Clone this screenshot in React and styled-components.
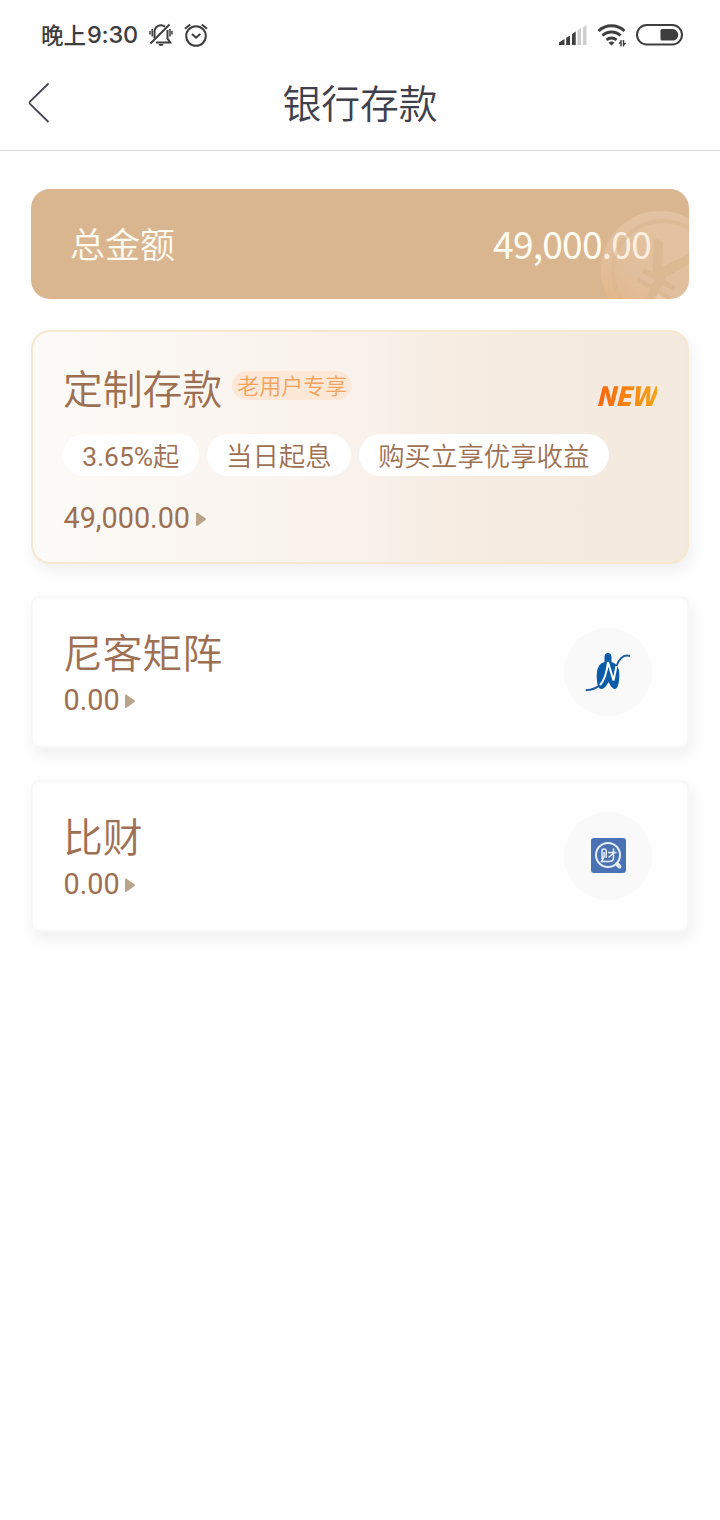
import React from 'react';
import styled, { createGlobalStyle } from 'styled-components';

const GlobalStyle = createGlobalStyle`
    * {
        box-sizing: border-box;
    }

    body {
        margin: 0;
        background-color: #FEFEFE;
        font-family: Roboto, 'Noto Sans CJK SC', sans-serif;
    }
`

const Page = styled.div`
    width: 720px;
    min-height: 1520px;
    background-color: #FEFEFE;
`

const StatusBar = styled.div`
    display: flex;
    align-items: center;
    height: 70px;
    padding: 0 37px 0 41px;
`

const Clock = styled.span`
    display: flex;
    align-items: center;
    height: 32px;
    color: #3E3E3E;
    font-family: 'Noto Sans CJK SC', sans-serif;
    font-size: 22.5px;
    font-weight: 500;
    line-height: 28px;
    padding-bottom: 2px;
`

const Digits = styled.span`
    margin: 2px 0 0 1px;
    font-family: Inter, sans-serif;
    font-size: 23.5px;
    font-weight: 500;
    letter-spacing: -0.2px;
`

const StatusIcons = styled.div`
    display: flex;
    align-items: center;
    gap: ${props => props.$gap};
    margin-left: ${props => props.$push || 'auto'};
`

const Header = styled.header`
    display: grid;
    grid-template-columns: 100px 1fr 100px;
    align-items: center;
    height: 81px;
    padding-bottom: 14px;
    border-bottom: 1px solid #DCDCDC;
`

const BackButton = styled.button`
    display: flex;
    height: 42px;
    padding: 0 0 0 27px;
    border: none;
    background: none;
`

const Title = styled.h1`
    margin: 4px 0 0;
    color: #40404C;
    font-size: 38.8px;
    font-weight: 350;
    line-height: 60px;
    text-align: center;
`

const Content = styled.main`
    display: flex;
    flex-direction: column;
    padding: 38px 31px;
`

const TotalCard = styled.section`
    position: relative;
    display: flex;
    align-items: center;
    justify-content: space-between;
    height: 110px;
    padding: 0 38px 3px 39px;
    border-radius: 19px;
    overflow: hidden;
    background-color: #DAB690;
    color: #FFFCF3;
    font-family: 'Noto Sans CJK SC', sans-serif;
    font-size: 35px;
    font-weight: 350;
`

const TotalAmount = styled.span`
    font-size: 37.2px;
    font-weight: 400;
    letter-spacing: -0.8px;
`

// the coin is see-through and lies over the last digits
const CoinMark = styled.svg`
    position: absolute;
    right: 0;
    bottom: 0;
`

const DepositCard = styled.section`
    height: 234px;
    margin-top: 31px;
    padding: 30px 30px 0 30px;
    border: 2px solid #F6E7CF;
    border-radius: 19px;
    background: linear-gradient(90deg, #FCFBF7 0%, #F9F1EB 50%, #F6ECE1 66%, #F4E9DE 100%);
    box-shadow: 3px 7px 14px rgba(0, 0, 0, 0.06);
`

const DepositHead = styled.div`
    display: flex;
    height: 50px;
`

const Name = styled.h2`
    margin: 0;
    padding-top: 4px;
    color: #9E7053;
    font-size: 39.8px;
    font-weight: 350;
    line-height: 50px;
`

const Badge = styled.span`
    height: 29px;
    margin: 9px 0 0 10px;
    padding: 0 4px 0 5px;
    border-radius: 15px;
    background-color: #FDE8D8;
    color: #F3A35C;
    font-size: 22px;
    font-weight: 350;
    line-height: 31px;
`

const NewTag = styled.span`
    margin: 14px 0 0 auto;
    padding-right: 2px;
    background: linear-gradient(90deg, #F9640F, #F5A318);
    background-clip: text;
    color: transparent;
    font-family: 'Noto Sans CJK SC', sans-serif;
    font-size: 26.4px;
    font-style: italic;
    font-weight: 900;
    letter-spacing: -0.7px;
    line-height: 37px;
`

const Chips = styled.div`
    display: flex;
    gap: 8px;
    margin-top: 22px;
`

const Chip = styled.span`
    height: 42px;
    padding: 0 19.3px;
    border-radius: 21px;
    background-color: white;
    color: #9E7053;
    font-size: 26.4px;
    font-weight: 350;
    line-height: 46px;
`

const Rate = styled.span`
    font-weight: 400;
`

const Amount = styled.div`
    display: flex;
    align-items: center;
    gap: 5.5px;
    margin-top: ${props => props.$top || '0'};
    padding-left: 0.5px;
    color: #9E7053;
    font-size: 28.8px;
    line-height: 40px;
`

const BankCard = styled.section`
    display: flex;
    align-items: center;
    justify-content: space-between;
    height: 152px;
    margin-top: ${props => props.$top};
    padding: 0 35px 0 30px;
    border: 2px solid #F7F7F7;
    border-radius: 8px;
    background-color: #FEFEFE;
    box-shadow: 3px 7px 14px rgba(0, 0, 0, 0.06);
`

const BankText = styled.div`
    padding-top: 2px;
`

const LogoCircle = styled.div`
    display: flex;
    align-items: center;
    justify-content: center;
    width: 88px;
    height: 88px;
    border-radius: 50%;
    background-color: #F9F9F9;
`

const MutedBell = () => (
    <svg width="24" height="24" viewBox="0 0 24 24" fill="none" stroke="#3E3E3E" strokeWidth="2">
        <path d="M5.500 15.500V8.800a6.500 6.500 0 0 1 10.500-5.200M18.500 7v8.500l2.700 4H7" />
        <path d="M1.500 20.500L20.500 1.500" />
        <path d="M9.500 21h5a2.500 2 0 0 1-5 0z" fill="#3E3E3E" stroke="none" />
        <path d="M1 8v3.500M3.200 6v7.500M21 6v7.500M23 8v3.500" strokeWidth="1.500" />
    </svg>
);

const AlarmClock = () => (
    <svg width="24" height="24" viewBox="0 0 24 24" fill="none" stroke="#3E3E3E" strokeWidth="2">
        <circle cx="12" cy="13" r="9.800" />
        <path d="M8 11l4 3.700 4.300-3.700M1 5.800l5.200-4.300M23 5.800l-5.200-4.300" />
    </svg>
);

const Signal = () => (
    <svg width="28" height="20" viewBox="0 0 28 20">
        <path d="M0 20v-2.500l5.500-3.500v6zM7.200 20v-7.200l3.800-2v9.200zM13 20V9l3.700-2.500V20z" fill="#3E3E3E" />
        <path d="M18.500 20V5.500l3.500-2.500v17zM24 20V2.500L27.500 0v20z" fill="#CFCFCF" />
    </svg>
);

const Wifi = () => (
    <svg width="29" height="24" viewBox="0 0 29 24" fill="none" stroke="#3E3E3E" strokeWidth="3">
        <path d="M1.500 8a19 19 0 0 1 26 0M5.500 12.500a13 13 0 0 1 18 0M9.500 17a7.500 7.500 0 0 1 10 0" />
        <path d="M11.500 19.800a4.500 4.500 0 0 1 6 0l-3 2.700z" fill="#3E3E3E" stroke="none" />
        <path d="M24 17v6.500M22 20.500l2-1.500M26.500 17v6.500M28.500 20l-2 2" strokeWidth="1.400" />
    </svg>
);

const Battery = () => (
    <svg width="47" height="22" viewBox="0 0 47 22">
        <rect x="1" y="1" width="45" height="19.500" rx="9.750" fill="none" stroke="#3E3E3E" strokeWidth="2" />
        <path d="M26 5h10.500a5.800 5.800 0 0 1 0 11.600H26a1.500 1.500 0 0 1-1.500-1.500V6.500A1.500 1.500 0 0 1 26 5z" fill="#3E3E3E" />
    </svg>
);

const Coin = () => (
    <CoinMark width="90" height="90" viewBox="0 0 90 90">
        <defs>
            <linearGradient id="coin" x1="0" y1="0.85" x2="0.5" y2="0.1">
                <stop offset="0" stopColor="#F0AE72" stopOpacity="0.5" />
                <stop offset="0.5" stopColor="#F1D3B8" stopOpacity="0.3" />
                <stop offset="1" stopColor="#F1D7BE" stopOpacity="0.36" />
            </linearGradient>
        </defs>
        <circle cx="61" cy="61" r="59" fill="url(#coin)" />
        <circle cx="64" cy="62" r="50" fill="none" stroke="#DAB690" strokeOpacity="0.6" strokeWidth="4" />
        <path
            d="M55 28.700L64 33.300L62.500 58.500L90 44.500V55.500L67 68L65.500 71L77 77L74 81.500L63 75.500L60 81L72 87.500L70.500 90H47L51 80.500L37 73L39.500 68.500L53 76L55.500 70.500L43 64L45.500 59.500L54 64z"
            fill="#DAB690"
            fillOpacity="0.8"
        />
        <path d="M58.500 84L56 90H68z" fill="#E4C5A4" />
    </CoinMark>
);

const Arrow = () => (
    <svg width="11" height="18" viewBox="0 -2 11 18">
        <path d="M0 2.500Q0 1 1.500 1.800L9.500 7.200Q10.500 8 9.500 9L1.500 14.700Q0 15.500 0 14z" fill="#B9A389" />
    </svg>
);

const NikeLogo = () => (
    <svg width="50" height="44" viewBox="0 0 50 44" fill="none">
        <path d="M21.500 7Q21.500 3 25 3T28.500 7V12Q36.300 14 36.300 24Q36.300 39 31.500 39Q29 39 25.500 32Q22 39 18.500 39Q13.700 39 13.700 25Q13.700 14 21.500 12z" fill="#0B5CA8" />
        <path d="M2.700 40.300Q12 40 18 34M33.500 16Q38 3.500 47 6" stroke="#1F5F9F" strokeWidth="1.900" />
        <path d="M17 35Q23 29 25 12L30.500 30.500L33.500 16" stroke="white" strokeWidth="2" />
    </svg>
);

const BicaiLogo = () => (
    <svg width="35" height="35" viewBox="0 0 35 35" fill="none" stroke="#E6EEFA">
        <rect width="35" height="35" rx="3" fill="#4A72B5" stroke="none" />
        <circle cx="17" cy="17" r="12" strokeWidth="2" />
        <path d="M26 26l2.500 2.500" strokeWidth="4" strokeLinecap="round" />
        <path d="M11 21V12.500Q11 11 13 11T15.200 12.500V20M13.100 14v5L10.500 23.500H18Q22.500 23.500 22.500 20V10.500M17 14.500H25.500M22 15.500L17.500 19.500" strokeWidth="1.500" />
    </svg>
);

const Bank = ({name, amount, logo, top}) => {
    return (
        <BankCard $top={top}>
            <BankText>
                <Name>{name}</Name>
                <Amount>{amount}<Arrow /></Amount>
            </BankText>
            <LogoCircle>{logo}</LogoCircle>
        </BankCard>
    );
}

const App = () => {
    return (
        <Page>
            <GlobalStyle />
            <StatusBar>
                <Clock>晚上<Digits>9:30</Digits></Clock>
                <StatusIcons $gap="10.500px" $push="11px">
                    <MutedBell />
                    <AlarmClock />
                </StatusIcons>
                <StatusIcons $gap="10px">
                    <Signal />
                    <Wifi />
                    <Battery />
                </StatusIcons>
            </StatusBar>
            <Header>
                <BackButton aria-label="返回">
                    <svg width="24" height="42" viewBox="0 0 24 42" fill="none" stroke="#454550" strokeWidth="1.800">
                        <path d="M21.500 1.500L3 19.500Q2 20.800 3 22L21.500 40" />
                    </svg>
                </BackButton>
                <Title>银行存款</Title>
            </Header>
            <Content>
                <TotalCard>
                    <span>总金额</span>
                    <TotalAmount>49,000.00</TotalAmount>
                    <Coin />
                </TotalCard>
                <DepositCard>
                    <DepositHead>
                        <Name>定制存款</Name>
                        <Badge>老用户专享</Badge>
                        <NewTag>NEW</NewTag>
                    </DepositHead>
                    <Chips>
                        <Chip><Rate>3.65%</Rate>起</Chip>
                        <Chip>当日起息</Chip>
                        <Chip>购买立享优享收益</Chip>
                    </Chips>
                    <Amount $top="22px">49,000.00<Arrow /></Amount>
                </DepositCard>
                <Bank name="尼客矩阵" amount="0.00" logo={<NikeLogo />} top="31.500px" />
                <Bank name="比财" amount="0.00" logo={<BicaiLogo />} top="32px" />
            </Content>
        </Page>
    );
}

export default App;
